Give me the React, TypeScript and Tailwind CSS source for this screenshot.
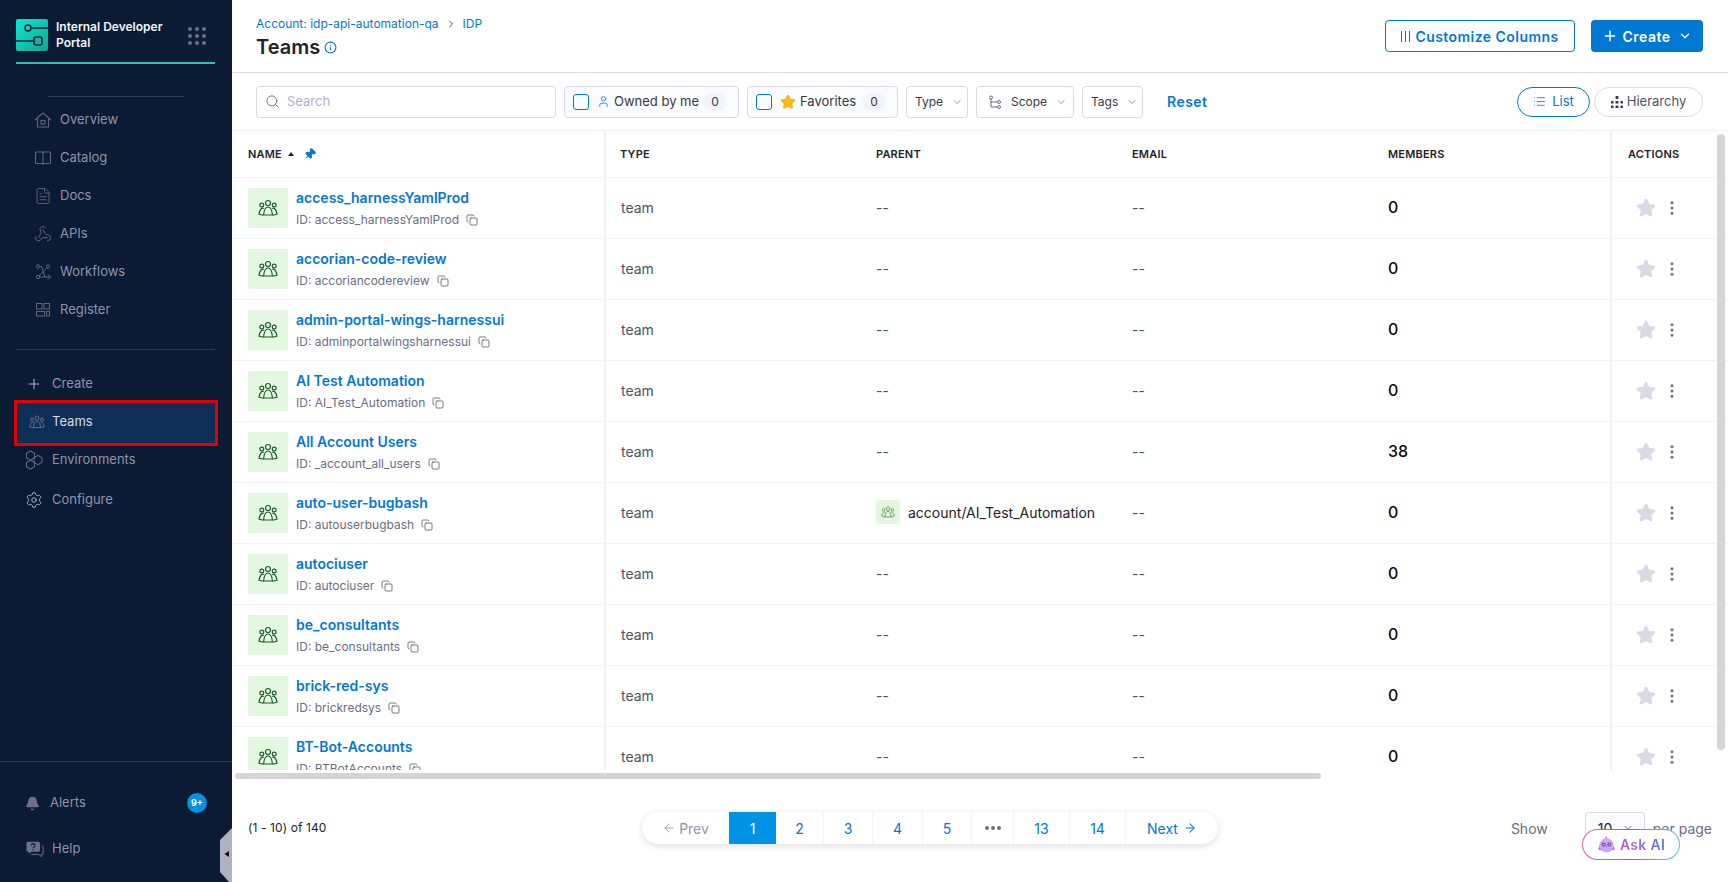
import {
    ArrowLeft,
    ArrowRight,
    Bell,
    ChevronDown,
    ChevronRight,
    Copy,
    FileText,
    Info,
    List,
    MoreVertical,
    Pin,
    Plus,
    Search,
    Settings,
    Star,
    User,
    Webhook,
} from 'lucide-react';

const teams = [
    { name: 'access_harnessYamlProd', id: 'access_harnessYamlProd', members: '0' },
    { name: 'accorian-code-review', id: 'accoriancodereview', members: '0' },
    { name: 'admin-portal-wings-harnessui', id: 'adminportalwingsharnessui', members: '0' },
    { name: 'AI Test Automation', id: 'AI_Test_Automation', members: '0' },
    { name: 'All Account Users', id: '_account_all_users', members: '38' },
    { name: 'auto-user-bugbash', id: 'autouserbugbash', members: '0', parent: 'account/AI_Test_Automation' },
    { name: 'autociuser', id: 'autociuser', members: '0' },
    { name: 'be_consultants', id: 'be_consultants', members: '0' },
    { name: 'brick-red-sys', id: 'brickredsys', members: '0' },
    { name: 'BT-Bot-Accounts', id: 'BTBotAccounts', members: '0' },
];

function TeamIcon({ className }: { className?: string }) {
    return (
        <svg viewBox="0 0 20 20" fill="none" stroke="currentColor" strokeWidth="1.2" className={className}>
            <circle cx="10" cy="5" r="2.5" />
            <path d="M5.6 17c.4-5 1.800-8 4.400-8s4 3 4.400 8z" />
            <circle cx="3.800" cy="7" r="1.900" />
            <path d="M5.800 10.500C4 9.500 2 11 1 16l3 1h1.600" />
            <circle cx="16.200" cy="7" r="1.900" />
            <path d="M14.200 10.500c1.800-1 3.800.5 4.800 5.500l-3 1h-1.600" />
        </svg>
    );
}

function HomeIcon() {
    return (
        <svg viewBox="0 0 18 18" fill="none" stroke="currentColor" strokeWidth="1.1" className="h-[18px] w-[18px]">
            <path d="M1 9l8-7 8 7M3.500 8v8h11V8" />
            <rect x="7" y="9.500" width="4" height="3.500" />
        </svg>
    );
}

function CatalogIcon() {
    return (
        <svg viewBox="0 0 18 18" fill="none" stroke="currentColor" strokeWidth="1.1" className="h-[18px] w-[18px]">
            <rect x="1.500" y="3" width="15" height="11.500" rx="1" />
            <path d="M9 3v13" />
        </svg>
    );
}

function WorkflowIcon() {
    return (
        <svg viewBox="0 0 18 18" fill="none" stroke="currentColor" strokeWidth="1" className="h-[18px] w-[18px]">
            <circle cx="4" cy="3.500" r="1.700" />
            <circle cx="4" cy="14" r="1.700" />
            <circle cx="14" cy="3.500" r="1.700" />
            <path d="M5.700 3.500h1.800l3.500 10.500H5.700M5.200 12.800L12.800 4.800M14 11.500l2.500 2.500-2.500 2.500M11 14h5.500" />
        </svg>
    );
}

function RegisterIcon() {
    return (
        <svg viewBox="0 0 18 18" fill="none" stroke="currentColor" strokeWidth="1" className="h-[18px] w-[18px]">
            <rect x="2.500" y="2.500" width="5.500" height="5.500" />
            <rect x="10" y="2.500" width="5.500" height="5.500" />
            <rect x="2.500" y="10.500" width="8" height="4.500" />
            <rect x="12.500" y="10.500" width="3" height="4.500" />
        </svg>
    );
}

function EnvironmentsIcon() {
    return (
        <svg viewBox="0 0 20 20" fill="none" stroke="currentColor" strokeWidth="1.1" className="h-5 w-5">
            <path d="M6.500 1l4 2.300v4.600l-4 2.300-4-2.300V3.300z" />
            <path d="M14 5.500l4 2.300v4.600l-4 2.300-4-2.300V7.800z" />
            <path d="M6.500 10.200l4 2.300v4.200l-4 2.300-4-2.300v-4.200z" />
        </svg>
    );
}

function HelpIcon() {
    return (
        <svg viewBox="0 0 20 20" className="h-[18px] w-[18px]">
            <path d="M2 2h12a1.500 1.500 0 0 1 1.500 1.500v8A1.500 1.500 0 0 1 14 13H6l-3 2.500V13H2A1.500 1.500 0 0 1 .5 11.500v-8A1.500 1.500 0 0 1 2 2z" fill="#6e6f88" />
            <path d="M17.500 6.500a1.500 1.500 0 0 1 1.500 1.500v8h-2l0 2.500-3-2.500H6" fill="none" stroke="#6e6f88" strokeWidth="1.1" />
            <path d="M6 6a2 2 0 1 1 3 1.700c-.7.4-1 .7-1 1.500" fill="none" stroke="#0a1b33" strokeWidth="1.300" />
            <circle cx="8" cy="11" r=".8" fill="#0a1b33" />
        </svg>
    );
}

function PortalLogo() {
    return (
        <svg viewBox="0 0 32 32" className="h-8 w-8 shrink-0">
            <defs>
                <linearGradient id="logoFill" x1="0" y1="0" x2="1" y2="1">
                    <stop offset="0" stopColor="#0ce6d0" />
                    <stop offset="1" stopColor="#12a594" />
                </linearGradient>
            </defs>
            <rect width="32" height="32" rx="2" fill="url(#logoFill)" />
            <path d="M16 9h16M0 22h17" stroke="#0a2233" strokeWidth="1.500" />
            <circle cx="12" cy="9" r="3" fill="#12d0bc" stroke="#0a2233" strokeWidth="1.600" />
            <rect x="18" y="18" width="8" height="8" rx="2" fill="#12b5a4" stroke="#0a2233" strokeWidth="1.600" />
        </svg>
    );
}

function NineDots() {
    return (
        <div className="grid grid-cols-3 gap-[3px]">
            {Array.from({ length: 9 }).map((_, i) => (
                <span key={i} className="h-1 w-1 rounded-full bg-[#6e6f88]" />
            ))}
        </div>
    );
}

function SideItem({ icon, label, pl = 'pl-[34px]', gap = 'w-[26px]' }: { icon: React.ReactNode; label: string; pl?: string; gap?: string }) {
    return (
        <div className={`flex h-[38px] items-center text-[13px] text-[#9293ab] ${pl}`}>
            <span className={`flex shrink-0 items-center text-[#62647c] ${gap}`}>{icon}</span>
            <span>{label}</span>
        </div>
    );
}

function Sidebar() {
    return (
        <aside className="relative flex h-full w-[232px] shrink-0 flex-col bg-[#0a1b33] text-[#7d7e97]">
            <div className="mt-[19px] ml-4 mr-[17px] flex h-[45px] items-start border-b-2 border-[#2fc0ac]">
                <PortalLogo />
                <div className="ml-2 w-[124px] text-[12px] leading-[16px] font-semibold text-[#f3f3fa]">
                    Internal Developer Portal
                </div>
                <div className="ml-auto mt-[8px] mr-[9px]">
                    <NineDots />
                </div>
            </div>
            <div className="mx-12 mt-[32px] h-px bg-[#2a3850]" />
            <div className="mt-[4px]">
                <SideItem icon={<HomeIcon />} label="Overview" />
                <SideItem icon={<CatalogIcon />} label="Catalog" />
                <SideItem icon={<FileText className="h-[18px] w-[18px]" strokeWidth={1.2} />} label="Docs" />
                <SideItem icon={<Webhook className="h-[18px] w-[18px]" strokeWidth={1.3} />} label="APIs" />
                <SideItem icon={<WorkflowIcon />} label="Workflows" />
                <SideItem icon={<RegisterIcon />} label="Register" />
            </div>
            <div className="ml-4 mr-[17px] mt-[20px] h-px bg-[#2a3850]" />
            <div className="mt-[15px]">
                <SideItem icon={<Plus className="h-4 w-4 text-[#b0b1c4]" strokeWidth={1.6} />} label="Create" pl="pl-[26px]" />
                <div className="mx-[14px] -mt-[3px] flex h-[46px] items-center border-[3px] border-[#e30000] bg-[#0d2f57] pb-[3px] pl-[12px] text-[13px] text-[#d9dae5]">
                    <span className="flex w-[23px] shrink-0 items-center">
                        <TeamIcon className="h-4 w-4 text-[#6e6f88]" />
                    </span>
                    <span>Teams</span>
                </div>
                <div className="-mt-[5px]">
                    <SideItem icon={<EnvironmentsIcon />} label="Environments" pl="pl-[24px]" gap="w-[28px]" />
                </div>
                <div className="mt-[2px]">
                    <SideItem icon={<Settings className="h-[18px] w-[18px] text-[#b0b1c4]" strokeWidth={1.3} />} label="Configure" pl="pl-[25px]" gap="w-[27px]" />
                </div>
            </div>
            <div className="mt-auto border-t border-[#2a3850] pb-[14px]">
                <div className="mt-[22px] flex h-[38px] items-center pl-[25px] pr-[25px] text-[13px] text-[#9293ab]">
                    <Bell className="h-[15px] w-[15px] shrink-0 fill-[#6e6f88] text-[#6e6f88]" />
                    <span className="ml-[10px]">Alerts</span>
                    <span className="ml-auto flex h-5 w-5 items-center justify-center rounded-full bg-[#0092e4] text-[9px] font-bold text-white">9+</span>
                </div>
                <div className="mt-[8px]">
                    <SideItem icon={<HelpIcon />} label="Help" pl="pl-[26px]" />
                </div>
            </div>
            <svg viewBox="0 0 12 54" className="absolute right-0 bottom-0 h-[54px] w-3">
                <path d="M12 0v54L9 54 0 44V12z" fill="#b0b1c4" />
                <path d="M9 23v6l-4.500-3z" fill="#0b0b0d" />
            </svg>
        </aside>
    );
}

function PageHeader() {
    return (
        <header className="flex h-[73px] shrink-0 items-center justify-between border-b border-[#d9dae5] pl-6 pr-[25px]">
            <div className="pt-[5px]">
                <div className="flex items-center text-[12px] leading-4 text-[#0278d5]">
                    <span>Account: idp-api-automation-qa</span>
                    <ChevronRight className="mx-[6px] h-3 w-3 text-[#4f5162]" />
                    <span>IDP</span>
                </div>
                <div className="mt-px flex items-center">
                    <h1 className="text-[20px] leading-7 font-semibold text-[#22222a]">Teams</h1>
                    <Info className="ml-1 h-[13px] w-[13px] text-[#0278d5]" />
                </div>
            </div>
            <div className="flex items-center gap-4">
                <button className="flex h-8 w-[190px] items-center justify-center gap-[5px] rounded-[4px] border border-[#0278d5] text-[14px] font-semibold tracking-[0.45px] text-[#0278d5]">
                    <span className="flex gap-[3px]">
                        <span className="h-[11px] w-px bg-[#0278d5]" />
                        <span className="h-[11px] w-px bg-[#0278d5]" />
                        <span className="h-[11px] w-px bg-[#0278d5]" />
                    </span>
                    Customize Columns
                </button>
                <button className="flex h-8 w-[112px] items-center justify-center gap-[5px] rounded-[4px] bg-[#0278d5] text-[14px] font-semibold tracking-[0.45px] text-white">
                    <Plus className="h-4 w-4" strokeWidth={2.2} />
                    Create
                    <ChevronDown className="ml-[3px] h-[14px] w-[14px]" strokeWidth={2.4} />
                </button>
            </div>
        </header>
    );
}

function FilterChip({ children, className }: { children: React.ReactNode; className: string }) {
    return (
        <div className={`flex h-8 items-center rounded-[4px] border border-[#d9dae5] text-[#383946] ${className}`}>
            {children}
        </div>
    );
}

function Toolbar() {
    return (
        <div className="flex h-[58px] shrink-0 items-center border-b border-[#f0f0f6] pl-6 pr-[25px]">
            <div className="flex h-8 w-[300px] items-center rounded-[4px] border border-[#d9dae5] pl-2 text-[13px] text-[#b0b1c4]">
                <Search className="h-[15px] w-[15px] text-[#6b6d85]" strokeWidth={1.5} />
                <span className="ml-[7px]">Search</span>
            </div>
            <FilterChip className="ml-2 w-[175px] bg-[#fafbfc] pl-2 text-[13px]">
                <span className="h-4 w-4 rounded-[3px] border border-[#0278d5]" />
                <User className="ml-2 h-[13px] w-[13px] text-[#0278d5]" strokeWidth={1.5} />
                <span className="ml-1">Owned by me</span>
                <span className="ml-1 flex h-[18px] w-6 items-center justify-center rounded-full bg-[#f3f3fa] text-[12px]">0</span>
            </FilterChip>
            <FilterChip className="ml-2 w-[151px] bg-[#fafbfc] pl-2 text-[13px]">
                <span className="h-4 w-4 rounded-[3px] border border-[#0278d5]" />
                <Star className="ml-2 h-4 w-4 fill-[#fcb519] text-[#fcb519]" />
                <span className="ml-1">Favorites</span>
                <span className="ml-[6px] flex h-[18px] w-6 items-center justify-center rounded-full bg-[#f3f3fa] text-[12px]">0</span>
            </FilterChip>
            <FilterChip className="ml-2 w-[62px] pl-2 text-[12px]">
                <span>Type</span>
                <ChevronDown className="ml-2 h-3 w-3 text-[#6b6d85]" strokeWidth={1.5} />
            </FilterChip>
            <FilterChip className="ml-2 w-[98px] pl-[11px] text-[12px]">
                <svg viewBox="0 0 14 14" fill="none" stroke="#6b6d85" strokeWidth="1" className="h-[14px] w-[14px]">
                    <circle cx="3" cy="2.500" r="1.500" />
                    <circle cx="11" cy="7" r="1.500" />
                    <circle cx="11" cy="12" r="1.500" />
                    <path d="M3 4v8h6.500M3 7h6.500" />
                </svg>
                <span className="ml-[9px]">Scope</span>
                <ChevronDown className="ml-2 h-3 w-3 text-[#6b6d85]" strokeWidth={1.5} />
            </FilterChip>
            <FilterChip className="ml-2 w-[61px] pl-2 text-[12px]">
                <span>Tags</span>
                <ChevronDown className="ml-2 h-3 w-3 text-[#6b6d85]" strokeWidth={1.5} />
            </FilterChip>
            <button className="ml-6 text-[14px] font-semibold tracking-[0.45px] text-[#0278d5]">Reset</button>
            <div className="ml-auto flex items-center gap-1">
                <button className="flex h-[30px] w-[73px] items-center justify-center gap-[6px] rounded-full border border-[#0278d5] text-[13px] text-[#0278d5]">
                    <List className="h-[13px] w-[13px]" strokeWidth={1.5} />
                    List
                </button>
                <button className="flex h-[30px] w-[109px] items-center justify-center gap-1 rounded-full border border-[#d9dae5] text-[13px] text-[#4f5162]">
                    <svg viewBox="0 0 12 12" fill="#383946" className="h-3 w-3">
                        <rect x="4.500" y="0" width="3" height="3" rx=".8" />
                        <rect x="0" y="5" width="2.500" height="2.500" rx=".6" />
                        <rect x="4.500" y="5" width="3" height="2.500" rx=".6" />
                        <rect x="9.500" y="5" width="2.500" height="2.500" rx=".6" />
                        <rect x="0" y="9.500" width="2.500" height="2.500" rx=".6" />
                        <rect x="4.500" y="9.500" width="3" height="2.500" rx=".6" />
                        <rect x="9.500" y="9.500" width="2.500" height="2.500" rx=".6" />
                    </svg>
                    Hierarchy
                </button>
            </div>
        </div>
    );
}

const rowGrid = 'grid grid-cols-[374px_255px_256px_256px_237px_106px]';

function TeamsTable() {
    return (
        <div className="relative min-h-0 flex-1">
            <div className="h-[639px] overflow-hidden">
                <div className={`${rowGrid} h-[47px] border-b border-[#f3f3fa] text-[11px] font-semibold tracking-[0.2px] text-[#22222a]`}>
                    <div className="flex items-center border-r-2 border-[#f0f0f6] pl-4">
                        NAME
                        <span className="ml-[6px] h-0 w-0 border-x-[3px] border-b-[4px] border-x-transparent border-b-[#22222a]" />
                        <Pin className="ml-[10px] h-3 w-3 rotate-45 fill-[#0278d5] text-[#0278d5]" />
                    </div>
                    <div className="flex items-center pl-[14px]">TYPE</div>
                    <div className="flex items-center pl-[15px]">PARENT</div>
                    <div className="flex items-center pl-[15px]">EMAIL</div>
                    <div className="flex items-center pl-[15px]">MEMBERS</div>
                    <div className="flex items-center border-l-2 border-[#f0f0f6] pl-4">ACTIONS</div>
                </div>
                {teams.map((team) => (
                    <div key={team.id} className={`${rowGrid} h-[61px] border-b border-[#f3f3fa]`}>
                        <div className="flex items-center border-r-2 border-[#f0f0f6] pl-4">
                            <div className="flex h-10 w-10 shrink-0 items-center justify-center bg-[#e4f7e1]">
                                <TeamIcon className="h-5 w-5 text-[#1e5c2c]" />
                            </div>
                            <div className="ml-2">
                                <div className="text-[14px] leading-5 font-semibold text-[#0278d5]">{team.name}</div>
                                <div className="mt-[4px] flex items-center text-[12px] leading-4 text-[#6b6d85]">
                                    ID: {team.id}
                                    <Copy className="ml-[7px] h-3 w-3 text-[#4f5162]" strokeWidth={1.5} />
                                </div>
                            </div>
                        </div>
                        <div className="flex items-center pb-[2px] pl-[15px] text-[14px] text-[#4f5162]">team</div>
                        <div className="flex items-center pb-[2px] pl-[15px] text-[14px] text-[#4f5162]">
                            {team.parent ? (
                                <>
                                    <span className="flex h-6 w-6 items-center justify-center rounded-[3px] bg-[#e4f7e1]">
                                        <TeamIcon className="h-[14px] w-[14px] text-[#4d9a4a]" />
                                    </span>
                                    <span className="ml-2 text-[#22222a]">{team.parent}</span>
                                </>
                            ) : (
                                '--'
                            )}
                        </div>
                        <div className="flex items-center pb-[2px] pl-[15px] text-[14px] text-[#4f5162]">--</div>
                        <div className="flex items-center pb-[2px] pl-[15px] text-[16px] font-medium text-[#0b0b0d]">{team.members}</div>
                        <div className="flex items-center border-l-2 border-[#f0f0f6] pb-px pl-[24px]">
                            <Star className="h-5 w-5 fill-[#d9dae5] text-[#d9dae5]" />
                            <MoreVertical className="ml-[7px] h-[18px] w-[18px] text-[#6b6d85]" strokeWidth={2} />
                        </div>
                    </div>
                ))}
            </div>
            <div className="absolute top-[3px] right-[3px] h-[616px] w-2 rounded-full bg-[#d5d5d5]" />
            <div className="absolute top-[642px] left-[3px] h-[6px] w-[1086px] rounded-full bg-[#d5d5d5]" />
        </div>
    );
}

function Pagination() {
    const cell = 'flex h-8 items-center justify-center border-r border-[#f3f3fa] text-[14px] text-[#0278d5]';
    return (
        <div className="flex h-8 items-center rounded-full bg-white shadow-[0_2px_6px_rgba(40,41,61,0.15)]">
            <div className="flex w-[87px] items-center justify-center gap-[3px] text-[14px] text-[#9293ab]">
                <ArrowLeft className="h-[14px] w-[14px]" strokeWidth={1.5} />
                Prev
            </div>
            <div className="flex h-8 w-[47px] items-center justify-center bg-[#0092e4] text-[14px] text-white">1</div>
            <div className={`${cell} w-[48px]`}>2</div>
            <div className={`${cell} w-[49px]`}>3</div>
            <div className={`${cell} w-[50px]`}>4</div>
            <div className={`${cell} w-[49px]`}>5</div>
            <div className="flex h-8 w-[42px] items-center justify-center gap-[2px] border-r border-[#f3f3fa]">
                <span className="h-1 w-1 rounded-full bg-[#6b6d85]" />
                <span className="h-1 w-1 rounded-full bg-[#6b6d85]" />
                <span className="h-1 w-1 rounded-full bg-[#6b6d85]" />
            </div>
            <div className={`${cell} w-[56px]`}>13</div>
            <div className={`${cell} w-[56px]`}>14</div>
            <div className="flex w-[92px] items-center justify-center gap-[5px] text-[14px] text-[#0278d5]">
                Next
                <ArrowRight className="h-[14px] w-[14px]" strokeWidth={1.8} />
            </div>
        </div>
    );
}

function AskAi() {
    return (
        <div className="absolute right-[48px] bottom-[22px] rounded-full bg-linear-to-r from-[#e85fb0] via-[#8f5be8] to-[#4fc3ea] p-px">
            <div className="flex h-[29px] w-[96px] items-center justify-center gap-1 rounded-full bg-white">
                <svg viewBox="0 0 20 20" className="h-[19px] w-[19px] shrink-0">
                    <path d="M1 15l2-4 14 0 2 4-3 1H4z" fill="#a678e8" />
                    <circle cx="10" cy="11" r="7.500" fill="#cfa6f5" />
                    <path d="M8.500 3.500c0-1 1-2 2-2-.3.8 0 1.400.5 2z" fill="#a678e8" />
                    <circle cx="7" cy="10" r="1.600" fill="none" stroke="#4c2a9a" strokeWidth="1" />
                    <circle cx="13" cy="10" r="1.600" fill="none" stroke="#4c2a9a" strokeWidth="1" />
                    <path d="M9.300 12h1.400" stroke="#4c2a9a" strokeWidth=".8" />
                </svg>
                <span className="bg-linear-to-r from-[#c552c9] to-[#4d78e0] bg-clip-text text-[14px] font-semibold tracking-[0.3px] text-transparent">
                    Ask AI
                </span>
            </div>
        </div>
    );
}

function Footer() {
    return (
        <footer className="relative flex h-[112px] shrink-0 items-start pt-[42px] pl-4 pr-4">
            <div className="flex h-8 w-[394px] shrink-0 items-center text-[12px] tracking-[0.1px] text-[#22222a]">(1 - 10) of 140</div>
            <Pagination />
            <div className="ml-auto flex h-8 items-center text-[14px] text-[#6b6d85]">
                <span>Show</span>
                <div className="ml-[37px] flex h-8 w-[60px] items-center justify-between rounded-[3px] border border-[#d9dae5] bg-[#fafbfc] pl-[12px] pr-[10px] text-[#22222a]">
                    10
                    <ChevronDown className="h-3 w-3 text-[#6b6d85]" />
                </div>
                <span className="ml-2">per page</span>
            </div>
            <AskAi />
        </footer>
    );
}

export default function App() {
    return (
        <div className="flex h-screen w-full overflow-hidden bg-white font-['Inter',sans-serif]">
            <Sidebar />
            <main className="flex min-w-0 flex-1 flex-col">
                <PageHeader />
                <Toolbar />
                <TeamsTable />
                <Footer />
            </main>
        </div>
    );
}
